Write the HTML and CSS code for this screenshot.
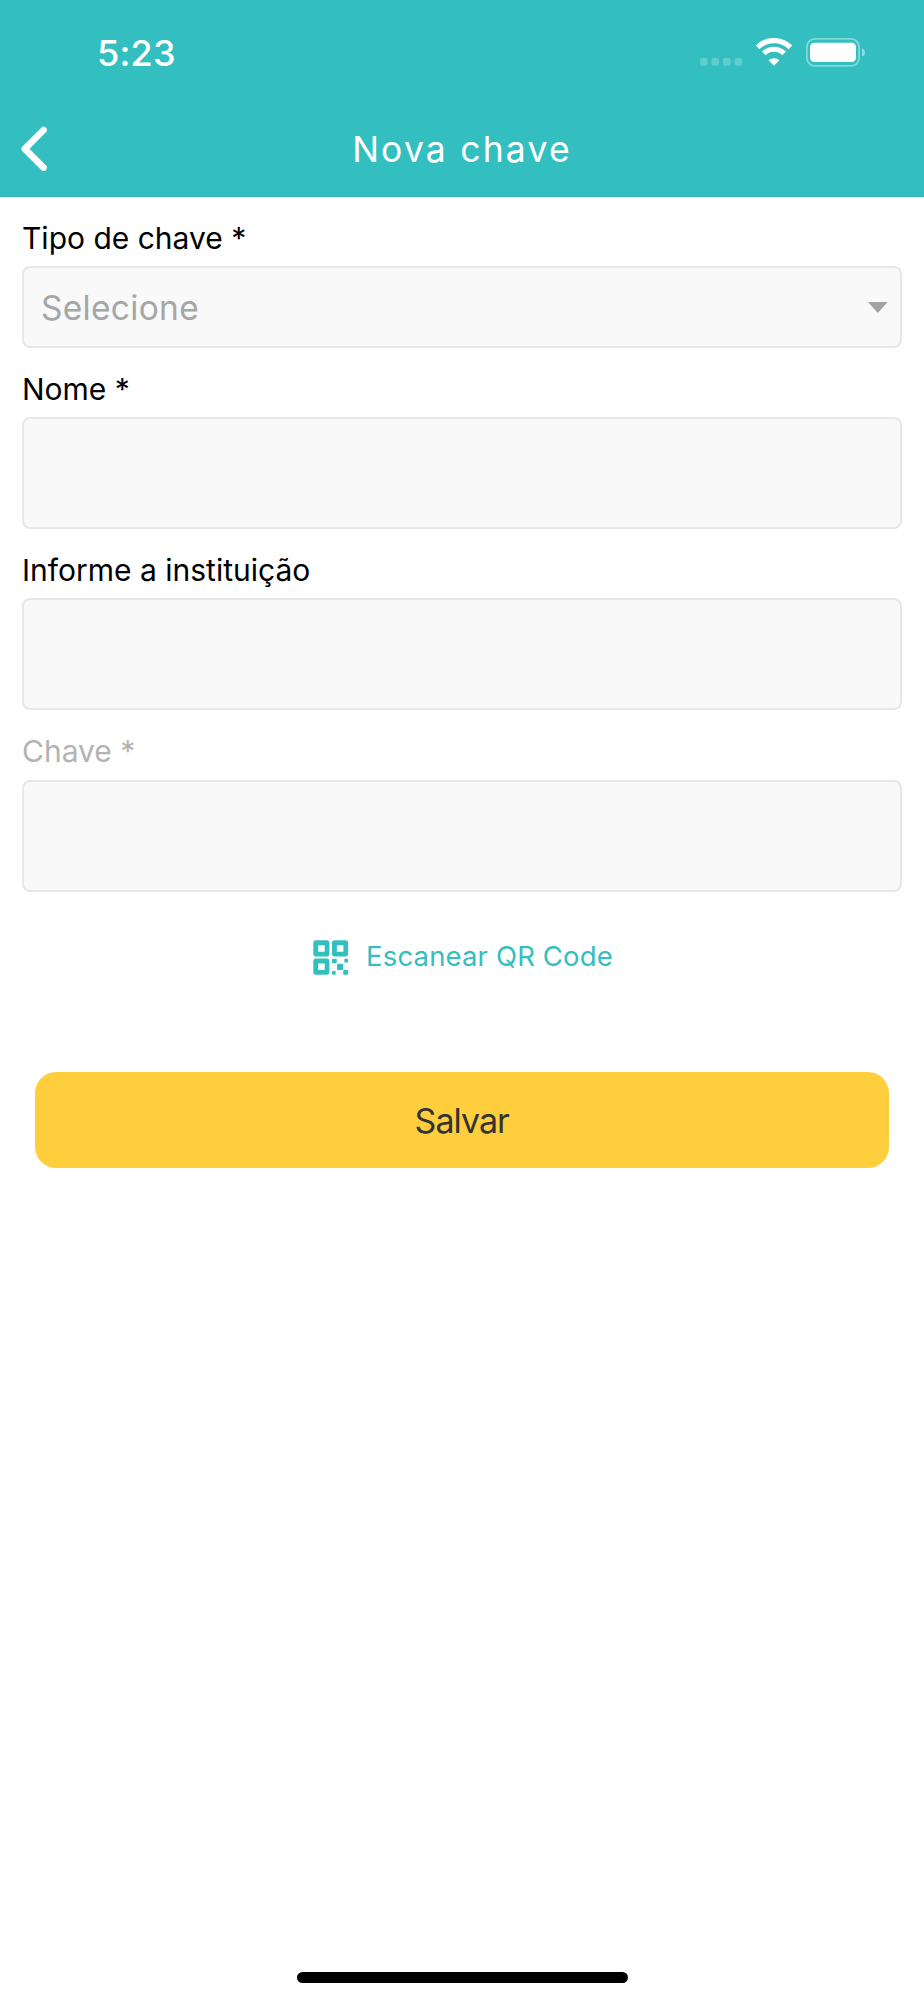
FILE: index.html
```html
<!DOCTYPE html>
<html lang="pt-BR">
<head>
<meta charset="utf-8">
<title>Nova chave</title>
<link rel="stylesheet" href="styles.css">
</head>
<body>
<div class="screen">
  <header class="header">
    <div class="status">
      <span class="time">5:23</span>
      <svg class="status-icons" width="166" height="30" viewBox="0 0 166 30" fill="#fff">
        <g opacity=".22">
          <rect x="0" y="20" width="7.6" height="7.8" rx="2"/>
          <rect x="11.5" y="20" width="7.6" height="7.8" rx="2"/>
          <rect x="23" y="20" width="7.6" height="7.8" rx="2"/>
          <rect x="34.6" y="20" width="7.6" height="7.8" rx="2"/>
        </g>
        <g fill="none" stroke="#fff">
          <path d="M57.6 9.3A23.3 23.3 0 0 1 90.4 9.3" stroke-width="5.2"/>
          <path d="M63.8 15.4A14.6 14.6 0 0 1 84.2 15.4" stroke-width="5"/>
        </g>
        <path d="M74 27.8L68.6 22.3C71.3 19.4 76.7 19.4 79.4 22.3Z"/>
        <rect x="106.9" y=".9" width="52.2" height="27" rx="8" fill="none" stroke="#fff" stroke-width="1.8" opacity=".4"/>
        <rect x="110" y="4.8" width="46" height="19.2" rx="4.2"/>
        <path d="M162 10.2C166 11.4 166 17.4 162 18.6Z" opacity=".45"/>
      </svg>
    </div>
    <div class="navbar">
      <svg class="back" width="27" height="46" viewBox="0 0 27 46" fill="none" stroke="#fff" stroke-width="6.6" stroke-linecap="round" stroke-linejoin="round"><path d="M22.6 4L3.8 22.8L22.6 41.6"/></svg>
      <h1 class="title">Nova chave</h1>
    </div>
  </header>
  <main class="form">
    <label class="label label-first">Tipo de chave *</label>
    <div class="input select">
      <span class="placeholder">Selecione</span>
      <svg width="20" height="11" viewBox="0 0 20 11" fill="#a3a3a3"><path d="M0 0H19.6L10.5 10.2Q9.8 10.8 9.1 10.2Z"/></svg>
    </div>
    <label class="label">Nome *</label>
    <div class="input"></div>
    <label class="label">Informe a instituição</label>
    <div class="input"></div>
    <label class="label label-disabled">Chave *</label>
    <div class="input"></div>
    <div class="scan">
      <svg width="36" height="36" viewBox="0 0 36 36" fill="#33bfbf">
        <path fill-rule="evenodd" d="M3 .3H13.7Q16.4.3 16.4 3V13.7Q16.4 16.4 13.7 16.4H3Q.3 16.4.3 13.7V3Q.3.3 3 .3ZM5.2 5.2V11.7H11.7V5.2Z"/>
        <path fill-rule="evenodd" d="M21.7.3H32.4Q35.1.3 35.1 3V13.7Q35.1 16.4 32.4 16.4H21.7Q19 16.4 19 13.7V3Q19 .3 21.7.3ZM23.9 5.2V11.7H30.4V5.2Z"/>
        <path fill-rule="evenodd" d="M3 18.6H13.7Q16.4 18.6 16.4 21.3V32Q16.4 34.7 13.7 34.7H3Q.3 34.7.3 32V21.3Q.3 18.6 3 18.6ZM5.2 23.5V30H11.7V23.5Z"/>
        <rect x="19" y="18.8" width="4.8" height="4.5" rx=".8"/>
        <rect x="31.3" y="18.8" width="3.8" height="3.8" rx=".8"/>
        <rect x="24" y="23.7" width="6.2" height="6.2" rx=".8"/>
        <rect x="19" y="31" width="3.7" height="3.7" rx=".8"/>
        <rect x="30.2" y="30" width="4.9" height="4.7" rx=".8"/>
      </svg>
      <span class="scan-text">Escanear QR Code</span>
    </div>
    <button class="save">Salvar</button>
  </main>
  <div class="home"></div>
</div>
</body>
</html>
```
FILE: styles.css
```css
* { box-sizing: border-box; }
body {
  margin: 0;
  background: #fff;
  font-family: Inter, "Liberation Sans", sans-serif;
}
.screen {
  display: flex;
  flex-direction: column;
  height: 2000px;
}
.header {
  height: 197px;
  background: #33bfbf;
  color: #fff;
  border-bottom: 1px solid #30b3b3;
}
.status {
  display: flex;
  justify-content: space-between;
  height: 106.5px;
  padding: 38px 58px 0 97px;
}
.time {
  font-size: 36px;
  line-height: 30px;
  font-weight: 550;
  letter-spacing: 0.2px;
}
.navbar {
  display: grid;
  grid-template-columns: 27px 1fr 27px;
  align-items: center;
  height: 84px;
  padding: 0 21px;
}
.title {
  margin: 0;
  padding-top: 3px;
  font-size: 35.5px;
  line-height: 44px;
  font-weight: 440;
  letter-spacing: 2.2px;
  text-align: center;
}
.form {
  flex: 1;
  display: flex;
  flex-direction: column;
  padding: 0 22px;
}
.label {
  height: 69.4px;
  padding-top: 21px;
  font-size: 30px;
  line-height: 40px;
  color: #000;
}
.label-first { height: 69px; }
.label-disabled { color: #b3b3b3; }
.input {
  height: 112px;
  border: 2px solid #e7e7e7;
  border-radius: 8px;
  background: #f9f9f9;
}
.select {
  display: flex;
  align-items: center;
  justify-content: space-between;
  height: 81.5px;
  padding: 2px 12px 0 17px;
}
.placeholder {
  font-size: 33.5px;
  line-height: 42px;
  letter-spacing: 0.3px;
  color: #a6a6a6;
}
.scan {
  display: flex;
  align-items: center;
  justify-content: center;
  gap: 17px;
  height: 36px;
  margin-top: 48px;
  padding-left: 2px;
}
.scan-text {
  padding-bottom: 3px;
  font-size: 27.5px;
  line-height: 33px;
  letter-spacing: 0.15px;
  color: #33bfbf;
}
.save {
  height: 96px;
  margin: 96.3px 13px 0 12.5px;
  padding: 2px 0 0;
  border: 0;
  border-radius: 21px;
  background: #ffce3d;
  color: #333;
  font-family: inherit;
  font-size: 34px;
  letter-spacing: -0.95px;
}
.home {
  align-self: center;
  width: 331px;
  height: 11px;
  margin-bottom: 17px;
  border-radius: 6px;
  background: #000;
}
```
